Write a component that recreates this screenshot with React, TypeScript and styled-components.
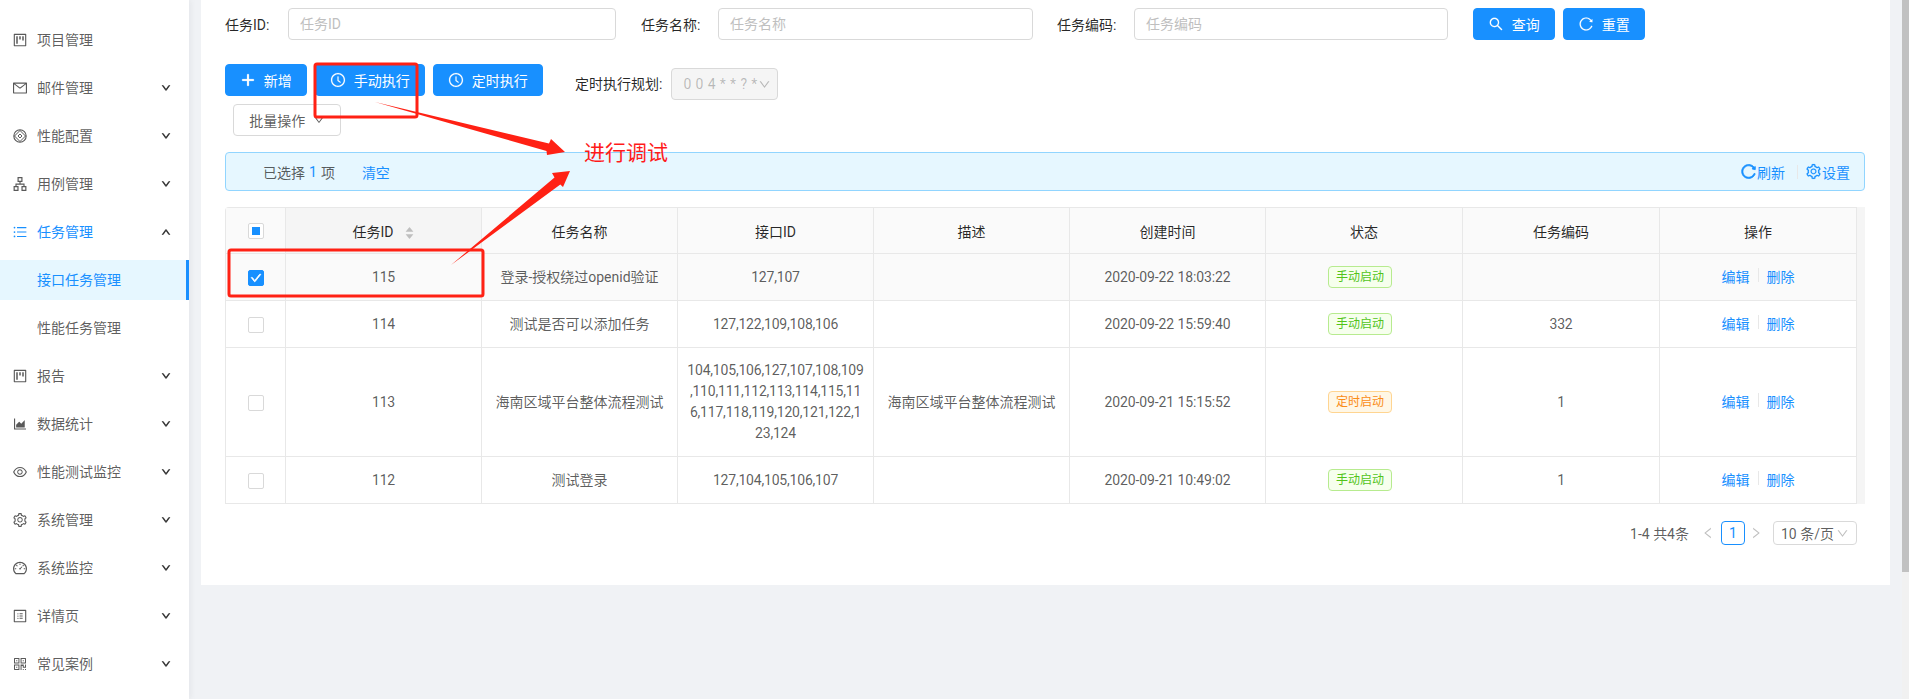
import React from "react";
import styled, { createGlobalStyle } from "styled-components";
import {
  AiOutlineProject, AiOutlineMail, AiOutlineApartment,
  AiOutlineUnorderedList, AiOutlineAreaChart, AiOutlineEye, AiOutlineSetting,
  AiOutlineDashboard, AiOutlineProfile, AiOutlineQrcode, AiOutlineDown, AiOutlineUp,
  AiOutlineClockCircle, AiOutlineSearch, AiOutlineReload, AiOutlinePlus, AiOutlineLeft,
  AiOutlineRight, AiFillCaretUp, AiFillCaretDown, AiOutlineCheck,
} from "react-icons/ai";

const FONT = `Roboto, "Noto Sans CJK SC", sans-serif`;

const Global = createGlobalStyle`
  html, body { margin: 0; padding: 0; height: 699px; overflow: hidden; background: #f0f2f5; }
  body { font-family: ${FONT}; font-size: 14px; color: rgba(0,0,0,.65); }
  * { box-sizing: border-box; }
`;

const Page = styled.div`
  position: relative;
  display: flex;
  width: 1909px;
  height: 699px;
  overflow: hidden;
`;

const Sidebar = styled.nav`
  width: 189px;
  flex: none;
  padding-top: 20px;
  background: #fff;
  box-shadow: 2px 0 6px rgba(0, 21, 41, 0.05);
`;

const MenuItem = styled.div<{ $active?: boolean; $selected?: boolean; $sub?: boolean }>`
  display: flex;
  align-items: center;
  height: 40px;
  margin-bottom: 8px;
  padding-left: ${(p) => (p.$sub ? "37px" : "12px")};
  padding-right: ${(p) => (p.$selected ? "15px" : "18px")};
  color: ${(p) => (p.$active || p.$selected ? "#1890ff" : "rgba(0,0,0,.65)")};
  background: ${(p) => (p.$selected ? "#e6f7ff" : "transparent")};
  border-right: ${(p) => (p.$selected ? "3px solid #1890ff" : "0")};
`;

const MenuIcon = styled.span`
  display: inline-flex;
  width: 16px;
  margin-right: 9px;
  font-size: 16px;
`;

const MenuLabel = styled.span`
  flex: 1;
  padding-bottom: 2px;
`;

const Chevron = styled.span`
  display: inline-flex;
  font-size: 10px;
  color: rgba(0, 0, 0, 0.65);
  svg { stroke-width: 100; }
`;

const Main = styled.main`
  flex: 1;
  padding: 0 12px;
`;

const Card = styled.section`
  padding: 8px 25px 40px 24px;
  background: #fff;
`;

const SearchRow = styled.div`
  display: flex;
  align-items: center;
  height: 32px;
`;

const Field = styled.label<{ $w: number; $gap: number }>`
  display: flex;
  align-items: center;
  width: ${(p) => p.$w}px;
  margin-right: ${(p) => p.$gap}px;
`;

const FieldLabel = styled.span<{ $w: number }>`
  width: ${(p) => p.$w}px;
  flex: none;
  color: rgba(0, 0, 0, 0.85);
  white-space: nowrap;
`;

const TextInput = styled.div`
  flex: 1;
  height: 32px;
  padding: 0 11px;
  line-height: 30px;
  color: #bfbfbf;
  background: #fff;
  border: 1px solid #d9d9d9;
  border-radius: 4px;
`;

const Button = styled.button<{ $w: number; $ghost?: boolean }>`
  display: inline-flex;
  align-items: center;
  justify-content: center;
  gap: 7.5px;
  width: ${(p) => p.$w}px;
  height: 32px;
  margin-right: 8px;
  padding: 0 0 1px;
  font: inherit;
  color: ${(p) => (p.$ghost ? "rgba(0,0,0,.65)" : "#fff")};
  background: ${(p) => (p.$ghost ? "#fff" : "#1890ff")};
  border: 1px solid ${(p) => (p.$ghost ? "#d9d9d9" : "#1890ff")};
  border-radius: 4px;
  svg { flex: none; }
`;

const BtnIcon = styled.span<{ $bold?: boolean }>`
  display: inline-flex;
  font-size: 16px;
  svg { stroke-width: ${(p) => (p.$bold ? 60 : 10)}; }
`;

const ActionRow = styled.div`
  display: flex;
  align-items: flex-start;
  height: 32px;
  margin-top: 24px;
`;

const BatchRow = styled.div`
  margin: 8px 0 0 8px;
`;

const ScheduleLabel = styled.span`
  margin: 9px 9px 0 24px;
  height: 22px;
  line-height: 22px;
  color: rgba(0, 0, 0, 0.85);
`;

const DisabledSelect = styled.div`
  display: flex;
  align-items: center;
  justify-content: space-between;
  flex: none;
  width: 107px;
  height: 32px;
  margin-top: 4px;
  padding: 0 11px 0 11px;
  color: rgba(0, 0, 0, 0.25);
  background: #f5f5f5;
  border: 1px solid #d9d9d9;
  border-radius: 4px;
  white-space: nowrap;
  svg { flex: none; }
`;

const SelectText = styled.span`
  letter-spacing: 0.4px;
`;

const Alert = styled.div`
  display: flex;
  align-items: center;
  justify-content: space-between;
  height: 39px;
  margin-top: 16px;
  padding: 0 14px 0 37px;
  background: #e6f7ff;
  border: 1px solid #91d5ff;
  border-radius: 4px;
`;

const Group = styled.div`
  display: flex;
  align-items: center;
`;

const Link = styled.a<{ $ml?: number }>`
  display: inline-flex;
  align-items: center;
  margin-left: ${(p) => p.$ml ?? 0}px;
  color: #1890ff;
`;

const AlertIcon = styled.span<{ $bold?: boolean }>`
  display: inline-flex;
  font-size: 17px;
  svg { stroke-width: ${(p) => (p.$bold ? 50 : 10)}; }
`;

const Strong = styled.span`
  margin: 0 4px;
  color: #1890ff;
`;

const VDivider = styled.i<{ $h: number; $l: number; $r: number }>`
  display: inline-block;
  width: 1px;
  height: ${(p) => p.$h}px;
  margin: 0 ${(p) => p.$r}px 0 ${(p) => p.$l}px;
  background: #e8e8e8;
`;

const TableWrap = styled.div`
  display: flex;
  margin-top: 16px;
`;

const ScrollGutter = styled.div`
  width: 8px;
  flex: none;
  background: #f5f5f5;
`;

const Table = styled.table`
  width: 1632px;
  flex: none;
  table-layout: fixed;
  border-collapse: separate;
  border-spacing: 0;
  border-top: 1px solid #e8e8e8;
  border-left: 1px solid #e8e8e8;
  border-radius: 4px 0 0 0;
`;

const Th = styled.th<{ $sorted?: boolean }>`
  height: 46px;
  padding: 0;
  font-weight: 400;
  color: rgba(0, 0, 0, 0.85);
  background: ${(p) => (p.$sorted ? "#f5f5f5" : "#fafafa")};
  border-right: 1px solid #e8e8e8;
  border-bottom: 1px solid #e8e8e8;
`;

const Tr = styled.tr<{ $selected?: boolean }>`
  background: ${(p) => (p.$selected ? "#fafafa" : "#fff")};
`;

const Td = styled.td<{ $h?: number; $ls?: number }>`
  height: ${(p) => p.$h ?? 47}px;
  padding: 0 8px;
  text-align: center;
  line-height: 21px;
  white-space: pre-line;
  letter-spacing: ${(p) => p.$ls ?? 0}px;
  border-right: 1px solid #e8e8e8;
  border-bottom: 1px solid #e8e8e8;
`;

const Check = styled.span<{ $state?: "on" | "partial" }>`
  display: inline-flex;
  align-items: center;
  justify-content: center;
  width: 16px;
  height: 16px;
  vertical-align: middle;
  color: #fff;
  font-size: 12px;
  background: ${(p) => (p.$state === "on" ? "#1890ff" : "#fff")};
  border: 1px solid ${(p) => (p.$state === "on" ? "#1890ff" : "#d9d9d9")};
  border-radius: 2px;
  svg { stroke-width: 70; }
`;

const CheckInner = styled.i`
  width: 8px;
  height: 8px;
  background: #1890ff;
`;

const SortWrap = styled.span`
  display: inline-flex;
  flex-direction: column;
  margin-left: 10px;
  vertical-align: middle;
  font-size: 11px;
  line-height: 0;
  color: #bfbfbf;
  svg { margin: -2px 0; }
`;

const Tag = styled.span<{ $kind: "green" | "orange" }>`
  display: inline-block;
  width: 64px;
  height: 22px;
  margin-right: 8px;
  font-size: 12px;
  line-height: 20px;
  text-align: center;
  color: ${(p) => (p.$kind === "green" ? "#52c41a" : "#fa8c16")};
  background: ${(p) => (p.$kind === "green" ? "#f6ffed" : "#fff7e6")};
  border: 1px solid ${(p) => (p.$kind === "green" ? "#b7eb8f" : "#ffd591")};
  border-radius: 4px;
`;

const Pager = styled.div`
  display: flex;
  align-items: center;
  justify-content: flex-end;
  height: 24px;
  margin-top: 17px;
  padding-right: 8px;
`;

const PagerTotal = styled.span`
  margin-right: 12px;
`;

const PagerArrow = styled.span`
  display: inline-flex;
  font-size: 14px;
  color: rgba(0, 0, 0, 0.25);
`;

const PageBox = styled.span`
  width: 24px;
  height: 24px;
  margin: 0 4px 0 6px;
  line-height: 22px;
  text-align: center;
  color: #1890ff;
  border: 1px solid #1890ff;
  border-radius: 4px;
`;

const PageSize = styled.span`
  display: flex;
  align-items: center;
  justify-content: space-between;
  width: 84px;
  height: 24px;
  margin-left: 10px;
  padding: 0 7px;
  border: 1px solid #d9d9d9;
  border-radius: 4px;
`;

const PageSizeArrow = styled.span`
  display: inline-flex;
  font-size: 13px;
  color: rgba(0, 0, 0, 0.25);
`;

const ScrollBar = styled.aside`
  width: 8px;
  flex: none;
  background: #f1f1f1;
`;

const ScrollThumb = styled.div`
  height: 572px;
  background: #c1c1c1;
`;

const Mark = styled.svg`
  position: absolute;
  left: 0;
  top: 0;
  pointer-events: none;
`;

const Caption = styled.span`
  position: absolute;
  left: 584px;
  top: 139px;
  font-size: 21px;
  line-height: 28px;
  color: #ff1a1a;
  white-space: nowrap;
`;

const ConfigIcon = () => (
  <svg width="1em" height="1em" viewBox="0 0 16 16" fill="none" stroke="currentColor">
    <circle cx="8" cy="8" r="6.2" strokeWidth="1.1" />
    <path d="M8 2.5 13.5 8 8 13.5 2.5 8Z" strokeWidth="1" />
    <path d="M8 6 10 8 8 10 6 8Z" strokeWidth="1" />
  </svg>
);

const menu = [
  { label: "项目管理", Icon: AiOutlineProject },
  { label: "邮件管理", Icon: AiOutlineMail, chevron: true },
  { label: "性能配置", Icon: ConfigIcon, chevron: true },
  { label: "用例管理", Icon: AiOutlineApartment, chevron: true },
  { label: "任务管理", Icon: AiOutlineUnorderedList, chevron: true, open: true },
  { label: "接口任务管理", sub: true, selected: true },
  { label: "性能任务管理", sub: true },
  { label: "报告", Icon: AiOutlineProject, chevron: true },
  { label: "数据统计", Icon: AiOutlineAreaChart, chevron: true },
  { label: "性能测试监控", Icon: AiOutlineEye, chevron: true },
  { label: "系统管理", Icon: AiOutlineSetting, chevron: true },
  { label: "系统监控", Icon: AiOutlineDashboard, chevron: true },
  { label: "详情页", Icon: AiOutlineProfile, chevron: true },
  { label: "常见案例", Icon: AiOutlineQrcode, chevron: true },
];

const widths = [60, 196, 196, 196, 196, 196, 197, 197, 197];
const heads = ["任务名称", "接口ID", "描述", "创建时间", "状态", "任务编码", "操作"];

const rows = [
  { id: "115", name: "登录-授权绕过openid验证", api: "127,107", desc: "", time: "2020-09-22 18:03:22", tag: "green", code: "", selected: true },
  { id: "114", name: "测试是否可以添加任务", api: "127,122,109,108,106", desc: "", time: "2020-09-22 15:59:40", tag: "green", code: "332" },
  { id: "113", name: "海南区域平台整体流程测试", api: "104,105,106,127,107,108,109\n,110,111,112,113,114,115,11\n6,117,118,119,120,121,122,1\n23,124", desc: "海南区域平台整体流程测试", time: "2020-09-21 15:15:52", tag: "orange", code: "1", h: 109 },
  { id: "112", name: "测试登录", api: "127,104,105,106,107", desc: "", time: "2020-09-21 10:49:02", tag: "green", code: "1" },
] as const;

export default function App() {
  return (
    <Page>
      <Global />
      <Sidebar>
        {menu.map((m) => (
          <MenuItem key={m.label} $sub={m.sub} $selected={m.selected} $active={m.open}>
            {m.Icon && (
              <MenuIcon>
                <m.Icon />
              </MenuIcon>
            )}
            <MenuLabel>{m.label}</MenuLabel>
            {m.chevron && <Chevron>{m.open ? <AiOutlineUp /> : <AiOutlineDown />}</Chevron>}
          </MenuItem>
        ))}
      </Sidebar>
      <Main>
        <Card>
          <SearchRow>
            <Field $w={391} $gap={25}>
              <FieldLabel $w={63}>任务ID:</FieldLabel>
              <TextInput>任务ID</TextInput>
            </Field>
            <Field $w={392} $gap={24}>
              <FieldLabel $w={77}>任务名称:</FieldLabel>
              <TextInput>任务名称</TextInput>
            </Field>
            <Field $w={391} $gap={25}>
              <FieldLabel $w={77}>任务编码:</FieldLabel>
              <TextInput>任务编码</TextInput>
            </Field>
            <Button $w={82}><BtnIcon><AiOutlineSearch /></BtnIcon>查询</Button>
            <Button $w={82}><BtnIcon><AiOutlineReload /></BtnIcon>重置</Button>
          </SearchRow>
          <ActionRow>
            <Button $w={82}><BtnIcon $bold><AiOutlinePlus /></BtnIcon>新增</Button>
            <Button $w={110}><BtnIcon><AiOutlineClockCircle /></BtnIcon>手动执行</Button>
            <Button $w={110}><BtnIcon><AiOutlineClockCircle /></BtnIcon>定时执行</Button>
            <ScheduleLabel>定时执行规划:</ScheduleLabel>
            <DisabledSelect>
              <SelectText>0 0 4 * * ? *</SelectText>
              <AiOutlineDown size={13} />
            </DisabledSelect>
          </ActionRow>
          <BatchRow>
            <Button $w={108} $ghost>批量操作<AiOutlineDown size={12} /></Button>
          </BatchRow>
          <Alert>
            <Group>
              已选择<Strong>1</Strong>项
              <Link $ml={27}>清空</Link>
            </Group>
            <Group>
              <Link><AlertIcon $bold><AiOutlineReload /></AlertIcon>刷新</Link>
              <VDivider $h={14} $l={12} $r={7} />
              <Link><AlertIcon><AiOutlineSetting /></AlertIcon>设置</Link>
            </Group>
          </Alert>
          <TableWrap>
            <Table>
              <colgroup>
                {widths.map((w, i) => <col key={i} style={{ width: w }} />)}
              </colgroup>
              <thead>
                <tr>
                  <Th><Check $state="partial"><CheckInner /></Check></Th>
                  <Th $sorted>
                    任务ID
                    <SortWrap><AiFillCaretUp /><AiFillCaretDown /></SortWrap>
                  </Th>
                  {heads.map((h) => <Th key={h}>{h}</Th>)}
                </tr>
              </thead>
              <tbody>
                {rows.map((r) => (
                  <Tr key={r.id} $selected={"selected" in r}>
                    <Td $h={"h" in r ? r.h : 47}>
                      {"selected" in r ? <Check $state="on"><AiOutlineCheck /></Check> : <Check />}
                    </Td>
                    <Td $ls={-0.2}>{r.id}</Td>
                    <Td>{r.name}</Td>
                    <Td $ls={-0.2}>{r.api}</Td>
                    <Td>{r.desc}</Td>
                    <Td $ls={-0.1}>{r.time}</Td>
                    <Td><Tag $kind={r.tag}>{r.tag === "green" ? "手动启动" : "定时启动"}</Tag></Td>
                    <Td $ls={-0.2}>{r.code}</Td>
                    <Td>
                      <Link>编辑</Link>
                      <VDivider $h={14} $l={8} $r={8} />
                      <Link>删除</Link>
                    </Td>
                  </Tr>
                ))}
              </tbody>
            </Table>
            <ScrollGutter />
          </TableWrap>
          <Pager>
            <PagerTotal>1-4 共4条</PagerTotal>
            <PagerArrow><AiOutlineLeft /></PagerArrow>
            <PageBox>1</PageBox>
            <PagerArrow><AiOutlineRight /></PagerArrow>
            <PageSize>10 条/页<PageSizeArrow><AiOutlineDown /></PageSizeArrow></PageSize>
          </Pager>
        </Card>
      </Main>
      <ScrollBar><ScrollThumb /></ScrollBar>
      <Mark width="1909" height="699" viewBox="0 0 1909 699">
        <g fill="none" stroke="#ff2114" strokeWidth="3">
          <rect x="315" y="64" width="102" height="53" rx="2" />
          <rect x="229" y="250" width="254" height="46" rx="2" />
        </g>
        <g fill="#ff2114">
          <polygon points="375,102 549,143.5 551,139 565,152 547,155 546.5,151" />
          <polygon points="451,265 554.5,177.6 552,173 570,171 563,187 560.3,184.4" />
        </g>
      </Mark>
      <Caption>进行调试</Caption>
    </Page>
  );
}
